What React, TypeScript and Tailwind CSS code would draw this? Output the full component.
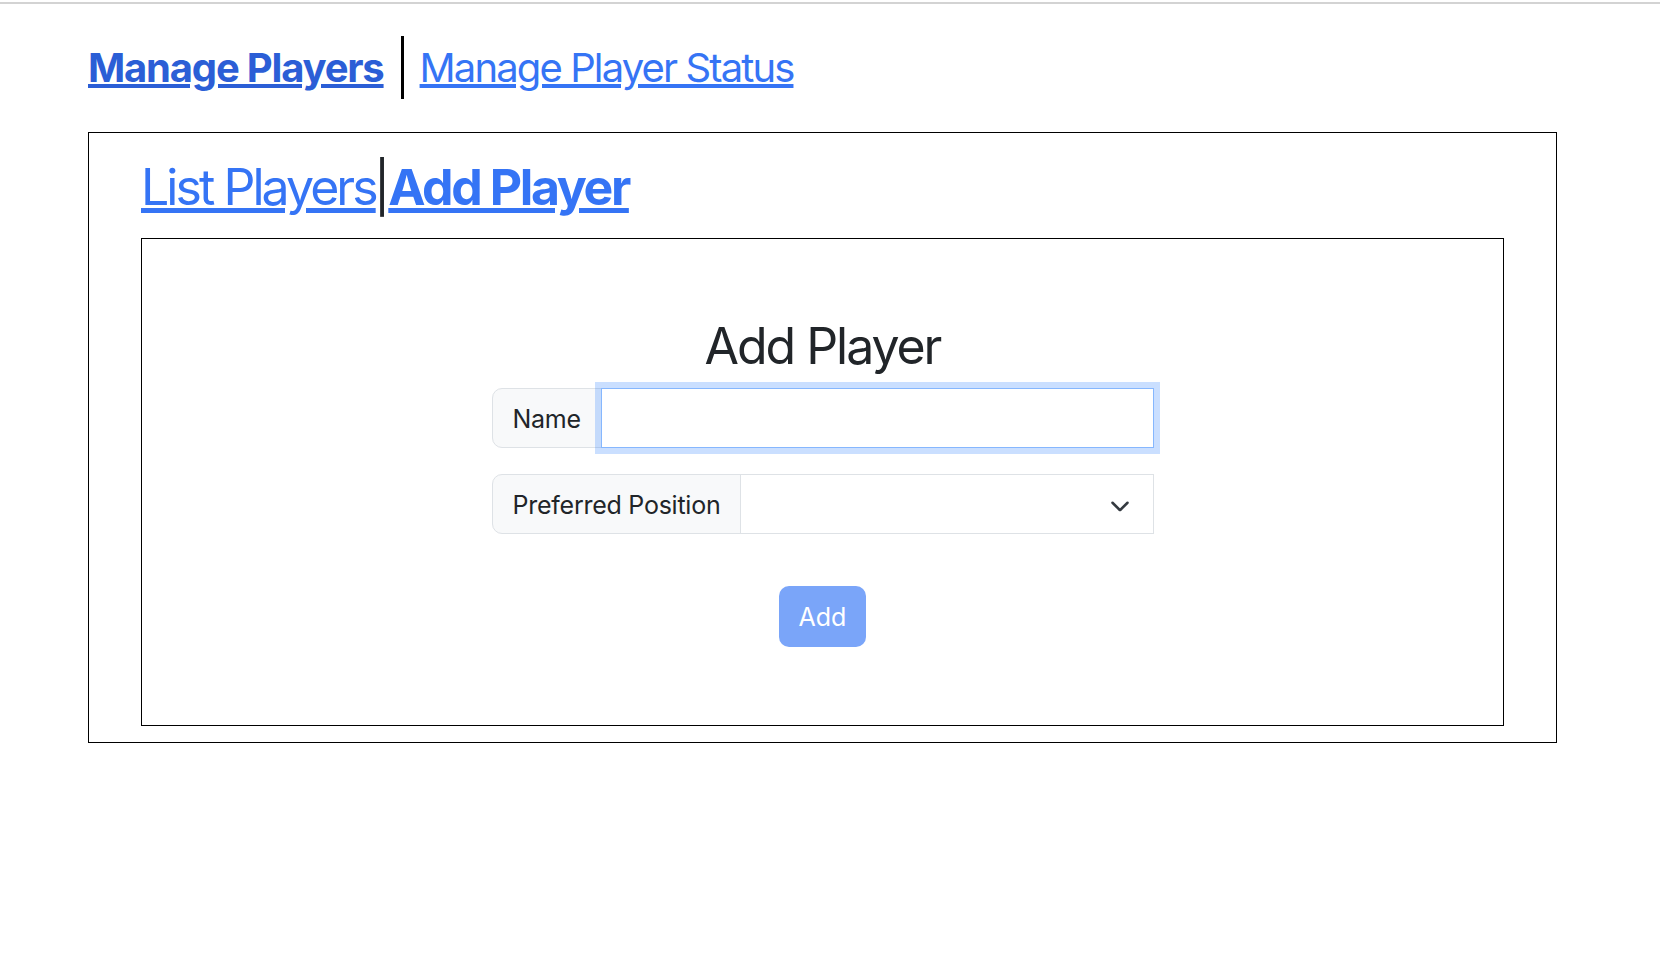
import { useState } from "react";

const font = "font-['Inter','Liberation_Sans',sans-serif]";

export default function App() {
  const [name, setName] = useState("");
  const [position, setPosition] = useState("");

  return (
    <div className={`min-h-screen bg-white text-[#212529] ${font}`}>
      <div className="mt-[2px] h-[2px] bg-[#d3d3d3]" />
      <div className="pl-[88px] pr-[103px] pt-[32px]">
        <nav className="flex h-[63px] items-center">
          <a href="#" className="text-[40px] font-bold leading-[48px] tracking-[-0.03em] text-[#2b5ed6] underline">
            Manage Players
          </a>
          <div className="ml-[17px] mr-[16px] w-[3px] self-stretch bg-black" />
          <a href="#" className="text-[40px] leading-[48px] tracking-[-0.047em] text-[#3574f5] underline">
            Manage Player Status
          </a>
        </nav>

        <div className="mt-[33px] border border-black px-[52px] pt-[24px] pb-[16px]">
          <div className="text-[50px] leading-[60px]">
            <a href="#" className="tracking-[-0.059em] text-[#3574f5] underline">
              List Players
            </a>
            <span className="mx-[-2px] text-[#212529]">|</span>
            <a href="#" className="font-bold tracking-[-0.048em] text-[#3574f5] underline">
              Add Player
            </a>
          </div>

          <div className="mt-[21px] flex flex-col items-center border border-black pt-[77px] pb-[78px]">
            <h1 className="text-[50px] leading-[60px] tracking-[-0.041em] text-[#212529]">Add Player</h1>

            <div className="mt-[12px] flex h-[60px] w-[662px] text-[25px]">
              <label className="flex items-center rounded-l-[10px] border border-[#dee2e6] bg-[#f8f9fa] px-[20px] pt-[3px] tracking-[-0.01em]">
                Name
              </label>
              <input
                value={name}
                onChange={(e) => setName(e.target.value)}
                className="-ml-px flex-1 border border-[#86b7fe] px-[20px] shadow-[0_0_0_6px_rgba(13,110,253,0.22)] outline-none"
              />
            </div>

            <div className="mt-[26px] flex h-[60px] w-[662px] text-[25px]">
              <label className="flex items-center rounded-l-[10px] border border-[#dee2e6] bg-[#f8f9fa] px-[20px] pt-[4px] tracking-[-0.01em]">
                Preferred Position
              </label>
              <div className="relative -ml-px flex-1">
                <select
                  value={position}
                  onChange={(e) => setPosition(e.target.value)}
                  className="h-full w-full appearance-none border border-[#dee2e6] bg-white px-[20px] outline-none"
                >
                  <option value=""></option>
                  <option value="GK">Goalkeeper</option>
                  <option value="DF">Defender</option>
                  <option value="MF">Midfielder</option>
                  <option value="FW">Forward</option>
                </select>
                <svg
                  className="pointer-events-none absolute top-1/2 right-[24px] -translate-y-1/2"
                  width="20"
                  height="15"
                  viewBox="0 0 16 12"
                  fill="none"
                  stroke="#343a40"
                  strokeWidth="2"
                  strokeLinecap="round"
                  strokeLinejoin="round"
                >
                  <path d="m2 5 6 6 6-6" />
                </svg>
              </div>
            </div>

            <button
              disabled
              className="mt-[52px] h-[61px] rounded-[10px] bg-[#7aa5f9] px-[20px] pt-[3px] text-[25px] text-white"
            >
              Add
            </button>
          </div>
        </div>
      </div>
    </div>
  );
}
